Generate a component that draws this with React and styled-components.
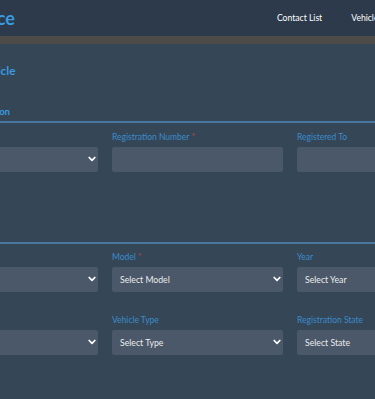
import React from "react";
import styled, { createGlobalStyle } from "styled-components";

const GlobalStyle = createGlobalStyle`
  html, body { margin: 0; padding: 0; }
  body {
    background: #354657;
    overflow: hidden;
    font-family: Lato, "Open Sans", Arial, sans-serif;
  }
  * { box-sizing: border-box; }
`;

const Page = styled.div`
  width: 1100px;
  margin-left: -300px;
  min-height: 399px;
  background: #354657;
`;

const Header = styled.header`
  display: flex;
  align-items: center;
  height: 36px;
  padding-left: 194px;
  background: #2c3a4b;
`;

const Brand = styled.div`
  font-size: 18px;
  font-weight: 700;
  color: #3a9be0;
  white-space: nowrap;
`;

const Nav = styled.nav`
  display: flex;
  gap: 29px;
  margin-left: ${(p) => p.$offset}px;
`;

const NavLink = styled.a`
  font-size: 8.6px;
  color: #ffffff;
  text-decoration: none;
  white-space: nowrap;
`;

const Band = styled.div`
  height: 8px;
  background: #4c4b48;
`;

const Main = styled.main`
  padding: 18px 0 0 227px;
`;

const Title = styled.h1`
  margin: 0;
  font-size: 11.7px;
  line-height: 16px;
  font-weight: 700;
  color: #3a9be0;
  white-space: nowrap;
`;

const Section = styled.section`
  margin-top: 28px;
  padding-bottom: 27px;
`;

const SectionTitle = styled.h2`
  margin: 0 0 0 -227px;
  padding: 0 0 3px 227px;
  font-size: 9.5px;
  line-height: 12px;
  font-weight: 700;
  color: #3a9be0;
  border-bottom: 2px solid #48779f;
  white-space: nowrap;
`;

const FieldGrid = styled.div`
  display: grid;
  grid-template-columns: repeat(4, 171px);
  column-gap: 14px;
  row-gap: 23px;
  margin-top: 8.5px;
`;

const Field = styled.div`
  display: flex;
  flex-direction: column;
  gap: 4px;
`;

const Label = styled.label`
  font-size: 8.5px;
  line-height: 11px;
  color: #3b8ccb;
  white-space: nowrap;
`;

const Req = styled.span`
  color: #b6464f;
  margin-left: 2px;
`;

const fieldBase = `
  width: 100%;
  height: 25px;
  border: none;
  border-radius: 2px;
  background: #4a5869;
  color: #ececec;
  font-family: Lato, "Open Sans", Arial, sans-serif;
  font-size: 8.7px;
  padding: 0 8px;
  outline: none;
`;

const TextInput = styled.input`
  ${fieldBase}
`;

const SelectWrap = styled.div`
  position: relative;
`;

const SelectBox = styled.select`
  ${fieldBase}
  appearance: none;
  -webkit-appearance: none;
  display: block;
`;

const Chevron = styled.svg`
  position: absolute;
  right: 2px;
  top: 9px;
  width: 8px;
  height: 6px;
  pointer-events: none;
`;

function Select({ placeholder }) {
  return (
    <SelectWrap>
      <SelectBox defaultValue="">
        <option value="">{placeholder}</option>
      </SelectBox>
      <Chevron viewBox="0 0 8 6">
        <path d="M1.2 1.5 L4 4.3 L6.8 1.5" fill="none" stroke="#ffffff" strokeWidth="1.7" strokeLinecap="round" strokeLinejoin="round" />
      </Chevron>
    </SelectWrap>
  );
}

function FieldItem({ label, required, children }) {
  return (
    <Field>
      <Label>
        {label}
        {required && <Req>*</Req>}
      </Label>
      {children}
    </Field>
  );
}

export default function App() {
  return (
    <>
      <GlobalStyle />
      <Page>
        <Header>
          <Brand>Vehicle Service</Brand>
          <Nav $offset={262}>
            <NavLink href="#">Contact List</NavLink>
            <NavLink href="#">Vehicles</NavLink>
            <NavLink href="#">Service Log</NavLink>
          </Nav>
        </Header>
        <Band />
        <Main>
          <Title>Add New Vehicle</Title>
          <Section>
            <SectionTitle>Vehicle Information</SectionTitle>
            <FieldGrid>
              <FieldItem label="Owner" required>
                <Select placeholder="" />
              </FieldItem>
              <FieldItem label="Registration Number" required>
                <TextInput />
              </FieldItem>
              <FieldItem label="Registered To">
                <TextInput />
              </FieldItem>
              <FieldItem label="VIN">
                <TextInput />
              </FieldItem>
            </FieldGrid>
          </Section>
          <Section>
            <SectionTitle>Details</SectionTitle>
            <FieldGrid>
              <FieldItem label="Make" required>
                <Select placeholder="" />
              </FieldItem>
              <FieldItem label="Model" required>
                <Select placeholder="Select Model" />
              </FieldItem>
              <FieldItem label="Year">
                <Select placeholder="Select Year" />
              </FieldItem>
              <FieldItem label="Colour">
                <Select placeholder="Select Colour" />
              </FieldItem>
              <FieldItem label="Fuel">
                <Select placeholder="" />
              </FieldItem>
              <FieldItem label="Vehicle Type">
                <Select placeholder="Select Type" />
              </FieldItem>
              <FieldItem label="Registration State">
                <Select placeholder="Select State" />
              </FieldItem>
              <FieldItem label="Status">
                <Select placeholder="Select Status" />
              </FieldItem>
            </FieldGrid>
          </Section>
        </Main>
      </Page>
    </>
  );
}
